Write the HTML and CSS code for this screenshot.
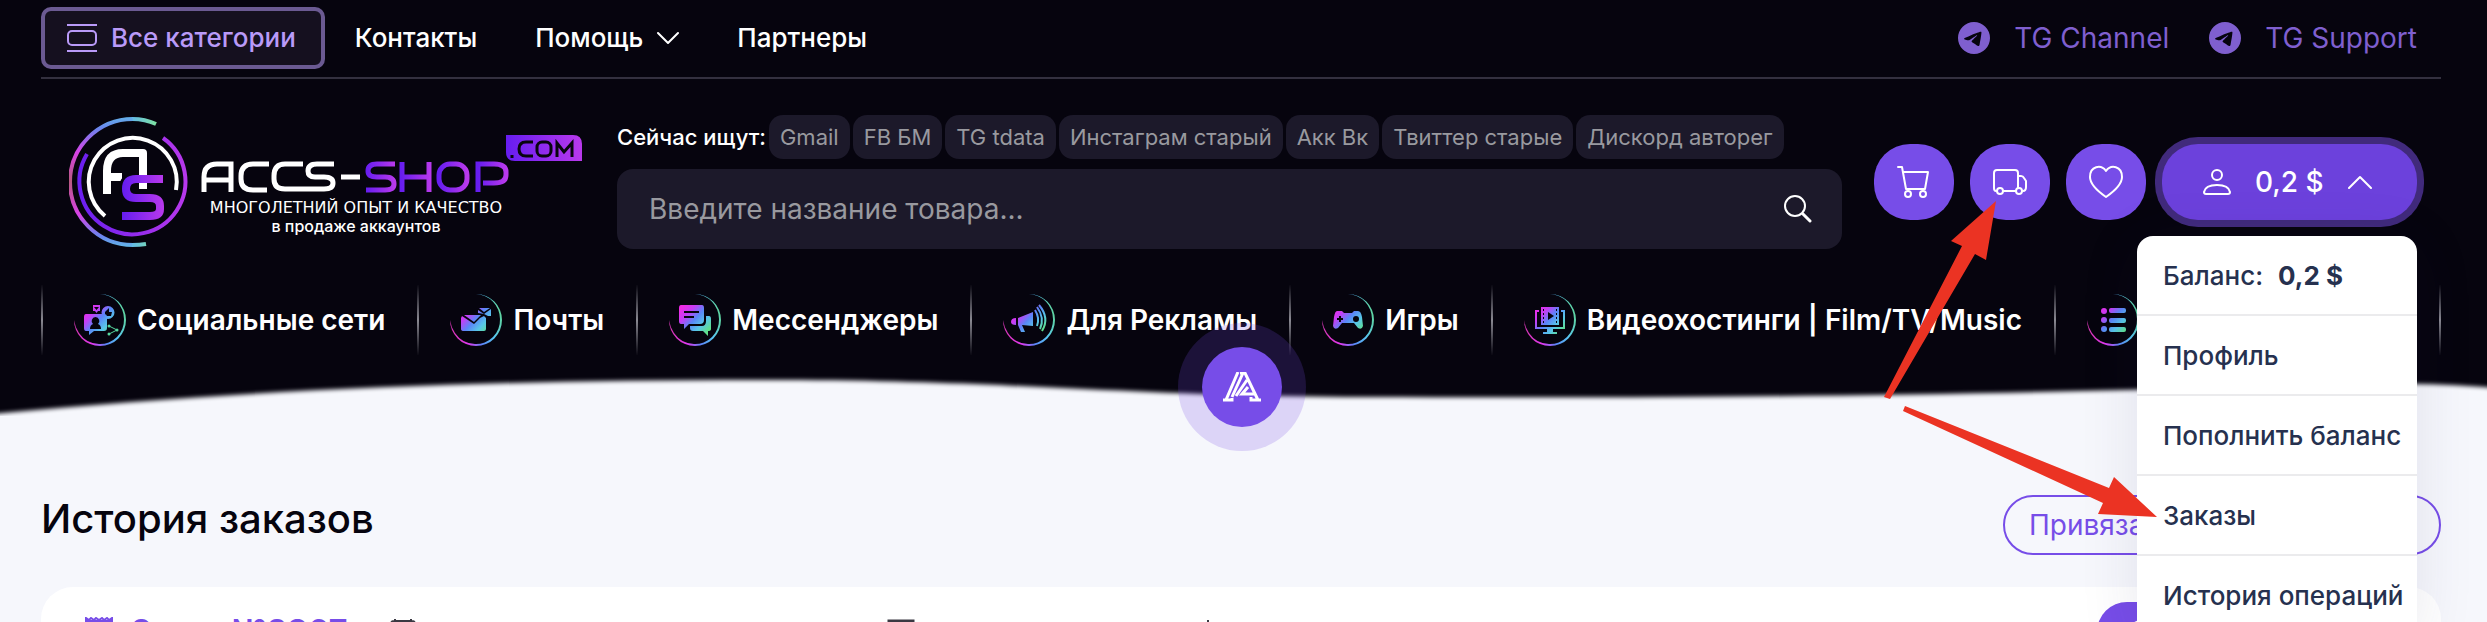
FILE: index.html
```html
<!DOCTYPE html>
<html lang="ru">
<head>
<meta charset="utf-8">
<title>ACCS-SHOP — История заказов</title>
<link rel="stylesheet" href="styles.css">
</head>
<body>
<svg class="defs" width="0" height="0" aria-hidden="true">
  <defs>
    <linearGradient id="neon" gradientUnits="userSpaceOnUse" x1="12" y1="14" x2="38" y2="38">
      <stop offset="0" stop-color="#f02be6"/><stop offset=".25" stop-color="#c63df5"/><stop offset=".5" stop-color="#5a86f8"/><stop offset=".75" stop-color="#58c6e8"/><stop offset="1" stop-color="#5fe08a"/>
    </linearGradient>
    <linearGradient id="ring" gradientUnits="userSpaceOnUse" x1="0" y1="34" x2="52" y2="20">
      <stop offset="0" stop-color="#d636b0"/><stop offset=".25" stop-color="#e038f0"/><stop offset=".5" stop-color="#5a86f8"/><stop offset=".75" stop-color="#58c6f0"/><stop offset="1" stop-color="#5fd59a"/>
    </linearGradient>
    <symbol id="crescent" viewBox="0 0 52 52">
      <path fill="url(#ring)" d="M26 0A26 26 0 1 1 0 26Q1 33 5 39A25 25 0 0 0 25 50A24 24 0 0 0 50 25A25 25 0 0 0 26 0Z"/>
    </symbol>
  </defs>
</svg>

<header class="header">
  <svg class="wave" viewBox="0 0 2487 60" preserveAspectRatio="none" aria-hidden="true">
    <path d="M-20 70V44C250 18 500 8 800 9C1050 11 1120 26 1400 26C1800 28 2050 21 2370 13C2420 12 2460 14 2510 18V70Z"/>
  </svg>
  <div class="container">
    <div class="topbar">
      <nav class="topnav">
        <button class="all-cats" type="button">
          <svg width="30" height="30" viewBox="0 0 30 30" fill="none" stroke="currentColor" stroke-width="2"><path d="M0 2H30M0 28H30"/><rect x="1" y="8" width="28" height="14" rx="4"/></svg>
          Все категории
        </button>
        <a class="toplink" href="#">Контакты</a>
        <a class="toplink" href="#">Помощь
          <svg width="22" height="14" viewBox="0 0 22 14" fill="none" stroke="currentColor" stroke-width="2" stroke-linecap="round" stroke-linejoin="round"><path d="M1 2L11 12L21 2"/></svg>
        </a>
        <a class="toplink" href="#">Партнеры</a>
      </nav>
      <div class="tg">
        <a href="#"><svg width="32" height="32" viewBox="0 0 16 16"><path fill="currentColor" d="M16 8A8 8 0 1 1 0 8a8 8 0 0 1 16 0M8.287 5.906q-1.168.486-4.666 2.01-.567.225-.595.442c-.03.243.275.339.69.47l.175.055c.408.133.958.288 1.243.294q.39.01.868-.32 3.269-2.206 3.374-2.23c.05-.012.12-.026.166.016s.042.12.037.141c-.03.129-1.227 1.241-1.846 1.817-.193.18-.33.307-.358.336a8 8 0 0 1-.188.186c-.38.366-.664.64.015 1.088.327.216.589.393.85.571.284.194.568.387.936.629q.14.092.27.187c.331.236.63.448.997.414.214-.02.435-.22.547-.82.265-1.417.786-4.486.906-5.751a1.4 1.4 0 0 0-.013-.315.34.34 0 0 0-.114-.217.53.53 0 0 0-.31-.093c-.3.005-.763.166-2.984 1.09"/></svg>TG Channel</a>
        <a href="#"><svg width="32" height="32" viewBox="0 0 16 16"><path fill="currentColor" d="M16 8A8 8 0 1 1 0 8a8 8 0 0 1 16 0M8.287 5.906q-1.168.486-4.666 2.01-.567.225-.595.442c-.03.243.275.339.69.47l.175.055c.408.133.958.288 1.243.294q.39.01.868-.32 3.269-2.206 3.374-2.23c.05-.012.12-.026.166.016s.042.12.037.141c-.03.129-1.227 1.241-1.846 1.817-.193.18-.33.307-.358.336a8 8 0 0 1-.188.186c-.38.366-.664.64.015 1.088.327.216.589.393.85.571.284.194.568.387.936.629q.14.092.27.187c.331.236.63.448.997.414.214-.02.435-.22.547-.82.265-1.417.786-4.486.906-5.751a1.4 1.4 0 0 0-.013-.315.34.34 0 0 0-.114-.217.53.53 0 0 0-.31-.093c-.3.005-.763.166-2.984 1.09"/></svg>TG Support</a>
      </div>
    </div>

    <div class="main-row">
      <a class="logo" href="#" aria-label="ACCS-SHOP.COM">
        <svg width="518" height="134" viewBox="0 0 518 134">
          <defs>
            <linearGradient id="lg-p" gradientUnits="userSpaceOnUse" x1="10" y1="0" x2="118" y2="0"><stop offset="0" stop-color="#6a1fef"/><stop offset="1" stop-color="#b838ec"/></linearGradient>
            <linearGradient id="lg-o" gradientUnits="userSpaceOnUse" x1="0" y1="0" x2="0" y2="132"><stop offset="0" stop-color="#62b8e8"/><stop offset=".1" stop-color="#6a86ee"/><stop offset=".28" stop-color="#d742e6"/><stop offset=".5" stop-color="#b85a80"/><stop offset=".75" stop-color="#d742e6"/><stop offset=".92" stop-color="#6a86ee"/><stop offset="1" stop-color="#62b8e8"/></linearGradient>
            <linearGradient id="lg-s" x1="0" y1="0" x2="1" y2="0"><stop offset="0" stop-color="#661df0"/><stop offset="1" stop-color="#b939ec"/></linearGradient>
            <linearGradient id="lg-h" gradientUnits="userSpaceOnUse" x1="332" y1="0" x2="362" y2="0"><stop offset="0" stop-color="#661df0"/><stop offset="1" stop-color="#b939ec"/></linearGradient>
            <linearGradient id="lg-f" gradientUnits="userSpaceOnUse" x1="54" y1="0" x2="95" y2="0"><stop offset="0" stop-color="#661df0"/><stop offset="1" stop-color="#b939ec"/></linearGradient>
            <linearGradient id="lg-g" gradientUnits="userSpaceOnUse" x1="62" y1="0" x2="88" y2="0"><stop offset="0" stop-color="#62b8e8"/><stop offset="1" stop-color="#7fe3a0"/></linearGradient>
          </defs>
          <g fill="none" stroke-width="4">
            <path stroke="url(#lg-o)" d="M64 4A63 63 0 0 0 64 130"/>
            <path stroke="url(#lg-g)" d="M63.500 4Q76 4 87 9M63 130Q71 130 77 129"/>
            <path stroke="url(#lg-p)" d="M94 23A53 53 0 1 1 18 39"/>
            <path stroke="#fff" d="M107 75A44 44 0 1 0 36 101"/>
          </g>
          <path fill="none" stroke="#fff" stroke-width="8" stroke-linejoin="round" d="M38 79V56Q38 38 54 38H74V73M38 62H53"/>
          <path fill="none" stroke="#06040e" stroke-width="12" d="M93 64H66Q56 64 56 73Q56 83 66 83H82"/>
          <path fill="none" stroke="#fff" stroke-width="8" d="M74 38V60M74 68V74"/>
          <path fill="none" stroke="url(#lg-f)" stroke-width="8" d="M94 64H67Q57 64 57 74Q57 83 67 83H81Q91 83 91 91V94Q91 101 81 101H53"/>
          <g fill="none" stroke="#fff" stroke-width="5">
            <path d="M135 77V62Q135 49 148 49H162V77M135 65H162"/>
            <path d="M200 49H184Q172 49 172 61V64Q172 75 184 75H198"/>
            <path d="M234 49H216Q205 49 205 61V64Q205 74 216 74H255Q264 74 264 68Q264 62 255 62H246Q239 62 239 56Q239 49 248 49H265"/>
            <path d="M272 62H291"/>
          </g>
          <g fill="none" stroke="url(#lg-s)" stroke-width="5">
            <path d="M326 49H308Q299 49 299 56Q299 62 308 62H316Q325 62 325 69Q325 75 316 75H297"/>
            <path stroke="url(#lg-h)" d="M333 47V77M360 47V77M333 62H360"/>
            <rect x="370" y="49" width="28" height="26" rx="11"/>
            <path d="M409 77V49H425Q437 49 437 57V60Q437 68 425 68H414"/>
          </g>
          <path fill="url(#lg-s)" d="M437 20H504Q513 20 513 29V46H446Q437 46 437 37Z"/>
          <g fill="none" stroke="#08050f" stroke-width="3"><path d="M464 27H457Q450 27 450 34Q450 41 457 41H464M488 42V28L495 37L503 28V42M443 40V43"/><rect x="468" y="27" width="14" height="14" rx="5"/></g>
        </svg>
        <span class="logo-text"><span class="tagline">многолетний опыт и качество</span><span class="subline">в продаже аккаунтов</span></span>
      </a>

      <div class="search-col">
        <div class="tags">
          <span class="tags-label">Сейчас ищут:</span>
          <a href="#">Gmail</a><a href="#">FB БМ</a><a href="#">TG tdata</a><a href="#">Инстаграм старый</a><a href="#">Акк Вк</a><a href="#">Твиттер старые</a><a href="#">Дискорд авторег</a>
        </div>
        <form class="search">
          <input type="text" aria-label="Поиск товара" placeholder="Введите название товара...">
          <button type="button" aria-label="Найти"><svg width="28" height="28" viewBox="0 0 28 28" fill="none" stroke="#fff" stroke-linecap="round"><circle cx="11" cy="11" r="10" stroke-width="2"/><path d="M19 19L26 26" stroke-width="3"/></svg></button>
        </form>
      </div>

      <div class="actions">
        <button class="round" type="button" aria-label="Корзина"><svg width="34" height="34" viewBox="0 0 34 34"><path d="M1 2H5L9 24H28L31 7H6"/><circle cx="11" cy="29" r="3"/><circle cx="26" cy="29" r="3"/></svg></button>
        <button class="round" type="button" aria-label="Заказы"><svg width="34" height="34" viewBox="0 0 34 34"><path d="M4 26H3Q1 26 1 23V8Q1 5 4 5H22Q25 5 25 8V23M10 26H23M25 11H28Q30 11 31 13L33 16V22Q33 26 30 26"/><circle cx="7" cy="26" r="3"/><circle cx="26" cy="26" r="3"/></svg></button>
        <button class="round" type="button" aria-label="Избранное"><svg width="34" height="34" viewBox="0 0 34 34"><path d="M17 6C12-1 1 1 1 12C1 19 7 25 17 32C27 25 33 19 33 12C33 1 22-1 17 6Z"/></svg></button>
        <div class="account">
          <button class="account-btn" type="button" aria-expanded="true">
            <svg width="28" height="28" viewBox="0 0 28 28"><circle cx="14" cy="7" r="5"/><path d="M3 26H25Q27 26 27 24C26 19 21 17 14 17C7 17 2 19 1 24Q1 26 3 26Z"/></svg>
            <span>0,2 $</span>
            <svg width="24" height="14" viewBox="0 0 24 14"><path d="M1 13L12 2L23 13"/></svg>
          </button>
          <ul class="menu">
            <li><a href="#">Баланс: <b>0,2 $</b></a></li>
            <li><a href="#">Профиль</a></li>
            <li><a href="#">Пополнить баланс</a></li>
            <li><a href="#">Заказы</a></li>
            <li><a href="#">История операций</a></li>
          </ul>
        </div>
      </div>
    </div>

    <nav class="cats">
      <a href="#"><svg width="52" height="52" viewBox="0 0 52 52"><use href="#crescent"/><g fill="url(#neon)"><path fill-rule="evenodd" d="M12 20H30Q33 20 33 23V34Q33 37 30 37H20L15 41V37H12Q10 37 10 34V23Q10 20 12 20ZM21.500 23A4 4 0 0 0 19 30Q16 31 16 35H27Q27 31 24 30A4 4 0 0 0 21.500 23Z"/><path fill-rule="evenodd" d="M19 11H26V17H24L22.500 19L21 17H19ZM22.500 16L25 13H20Z"/><path fill-rule="evenodd" d="M34 12A6.500 6.500 0 1 1 34 25A6.500 6.500 0 1 1 34 12ZM31 18V22H37L38 18H35V14Z"/></g><path d="M35 32L43 36L35 40" fill="none" stroke="#56d8a0" stroke-width="1"/><g fill="#56d8a0"><circle cx="35" cy="32" r="1.500"/><circle cx="43" cy="36" r="1.500"/><circle cx="35" cy="40" r="1.500"/></g></svg>Социальные сети</a>
      <a href="#"><svg width="52" height="52" viewBox="0 0 52 52"><use href="#crescent"/><g fill="url(#neon)"><path d="M12 22L24 30L30 24L34 22L36 24V35Q36 37 34 37H14Q11 37 11 35V24Z"/><path d="M14 21H31L24 28Z"/><path d="M28 16L34 20L41 15V22H38L34 20L28 19ZM29 14H40L34 18Z"/></g></svg>Почты</a>
      <a href="#"><svg width="52" height="52" viewBox="0 0 52 52"><use href="#crescent"/><path fill="url(#neon)" fill-rule="evenodd" d="M12 11H33Q35 11 35 14V26Q35 30 31 30H20L15 35V30H12Q10 30 10 27V14Q10 11 12 11ZM15 17V19H30V17ZM15 22V24H25V22Z"/><path fill="url(#neon)" d="M37 22H40Q42 22 42 25V35Q42 37 39 37V42L34 37H24Q21 37 21 34V32H33Q37 32 37 27Z"/></svg>Мессенджеры</a>
      <a href="#"><svg width="52" height="52" viewBox="0 0 52 52"><use href="#crescent"/><path fill="url(#neon)" d="M15 24L30 18V32L19 31L22 38H18L15 31ZM13 24V31Q8 31 8 28Q8 24 13 24Z"/><path fill="none" stroke="url(#neon)" stroke-width="2" d="M32 16Q37 24 34 32M34 13Q42 24 37 35M36 11Q47 24 39 37"/></svg>Для Рекламы</a>
      <a href="#"><svg width="52" height="52" viewBox="0 0 52 52"><use href="#crescent"/><path fill="url(#neon)" fill-rule="evenodd" d="M15 17H20L22 19H30L32 17H36Q39 17 40 23L41 32Q40 36 36 34L32 29H20L16 34Q12 36 11 32L12 23Q13 17 15 17ZM17 22V24H15V26H17V28H19V26H21V24H19V22ZM34 22A3 3 0 1 0 34 28A3 3 0 1 0 34 22Z"/></svg>Игры</a>
      <a href="#"><svg width="52" height="52" viewBox="0 0 52 52"><use href="#crescent"/><path fill="url(#neon)" fill-rule="evenodd" d="M17 13H35V31H17ZM19 15V17H20V15ZM19 19V21H20V19ZM19 23V25H20V23ZM19 27V29H20V27ZM32 15V17H33V15ZM32 19V21H33V19ZM32 23V25H33V23ZM32 27V29H33V27ZM24 18L30 22L24 26Z"/><path fill="none" stroke="url(#neon)" stroke-width="2" d="M15 17H12V34H40V17H37"/><path fill="url(#neon)" d="M23 35H29V38H33V40H19V38H23Z"/></svg>Видеохостинги | Film/TV/Music</a>
      <a href="#" aria-label="Другое"><svg width="52" height="52" viewBox="0 0 52 52"><use href="#crescent"/><g fill="url(#neon)"><circle cx="17" cy="17" r="3"/><circle cx="17" cy="26" r="3"/><circle cx="17" cy="35" r="3"/><rect x="22" y="14" width="17" height="5" rx="2"/><rect x="22" y="24" width="17" height="5" rx="2"/><rect x="22" y="33" width="17" height="5" rx="2"/></g></svg></a>
    </nav>
  </div>
  <button class="fab" type="button" aria-label="Меню"><svg width="38" height="30" viewBox="0 0 38 30" fill="none" stroke="#fff" stroke-width="3"><path d="M15 0L3 28H9M17 1H22L35 28M0 28H9V26M38 28H28V25M20 1L9 25M24 8L13 24M25 15L19 22H31"/></svg></button>
</header>

<main class="container">
  <div class="title-row">
    <h1>История заказов</h1>
    <button class="bind" type="button">Привязать</button>
  </div>
  <section class="card">
    <div class="order">
      <span class="order-no"><svg width="28" height="30" viewBox="0 0 28 30" fill="none" stroke="currentColor" stroke-width="2"><path d="M1 30V1L4 3L6 1L9 3L11 1L14 3L17 1L19 3L22 1L24 3L27 1V30M1 4H27"/></svg>Заказ №2867</span>
      <svg width="26" height="26" viewBox="0 0 26 26" fill="none" stroke="currentColor" stroke-width="2"><path d="M5 0V3M21 0V3M1 26V5Q1 2 4 2H22Q25 2 25 5V26M1 9H25"/></svg>
      <svg width="28" height="26" viewBox="0 0 28 26" fill="none" stroke="currentColor" stroke-width="3"><path d="M2 26V2H26V26"/></svg>
      <svg width="2" height="24" viewBox="0 0 2 24" stroke="currentColor" stroke-width="2"><path d="M1 0V24"/></svg>
    </div>
    <button class="order-btn" type="button" aria-label="Подробнее"><svg width="24" height="24" viewBox="0 0 24 24" fill="none" stroke="currentColor" stroke-width="2"><circle cx="12" cy="12" r="11"/></svg></button>
  </section>
</main>

<svg class="arrows" width="2487" height="622" viewBox="0 0 2487 622" aria-hidden="true">
  <path d="M1996 201L1986 260L1975 254L1890 399L1884 397L1962 246L1951 241Z"/>
  <path d="M2157 517L2098 514L2103 503L1903 411L1905 406L2109 488L2114 477Z"/>
</svg>
</body>
</html>
```
FILE: styles.css
```css
* { box-sizing: border-box; }
body { margin: 0; background: #f6f7fc; color: #06040e; font: 400 28px/36px Inter, "Noto Sans", sans-serif; overflow: hidden; height: 100vh; position: relative; }
a { color: inherit; text-decoration: none; }
button, input { font: inherit; color: inherit; border: 0; background: none; padding: 0; margin: 0; }
svg { flex: none; display: block; }
.defs { position: absolute; }
.container { padding: 0 46px 0 41px; }

.header { position: relative; background: #06040e; color: #fff; padding-bottom: 61px; }
.wave { position: absolute; left: 0; bottom: -15px; width: 100%; height: 60px; }
.wave path { fill: #f6f7fc; filter: blur(2px); }
.header .container { position: relative; z-index: 2; }

.topbar { display: flex; justify-content: space-between; align-items: center; padding: 7px 0 8px; border-bottom: 2px solid #33303f; }
.topnav { display: flex; align-items: center; font-size: 26px; font-weight: 500; }
.all-cats { display: flex; align-items: center; gap: 14px; height: 62px; padding: 0 25px 0 22px; border: 4px solid #6b5a92; border-radius: 10px; background: #15101f; color: #b99af8; font-weight: 500; margin-right: 30px; }
.toplink { display: flex; align-items: center; gap: 14px; margin-right: 58px; }
.tg { display: flex; gap: 40px; padding-right: 24px; color: #7f5fcf; font-size: 28px; }
.tg a { display: flex; align-items: center; gap: 24px; }

.main-row { display: flex; align-items: flex-start; padding-top: 36px; }
.logo { position: relative; width: 518px; margin: 0 30px 0 28px; }
.logo-text { position: absolute; left: 134px; top: 85px; width: 306px; display: flex; flex-direction: column; align-items: center; font-size: 16px; line-height: 20px; font-weight: 500; white-space: nowrap; }
.tagline { text-transform: uppercase; font: 400 16px/16px "DejaVu Sans", sans-serif; }

.search-col { flex: 1; min-width: 0; }
.tags { display: flex; gap: 3px; font-size: 22px; color: #99999f; white-space: nowrap; line-height: 44px; }
.tags-label { color: #fff; font-weight: 500; }
.tags a { background: #1c192a; border-radius: 14px; padding: 0 11px; }
.search { display: flex; align-items: center; height: 80px; margin-top: 10px; padding: 0 30px 0 32px; border-radius: 16px; background: #1c192a; }
.search input { flex: 1; outline: 0; }
.search input::placeholder { color: #99999f; opacity: 1; }

.actions { display: flex; gap: 16px; margin: 29px 24px 0 32px; }
.actions svg { fill: none; stroke: #fff; stroke-width: 2; stroke-linecap: round; stroke-linejoin: round; }
.round { width: 80px; height: 76px; border-radius: 36px; background: #774de8; display: grid; place-items: center; }
.account { position: relative; z-index: 5; }
.account-btn { width: 255px; height: 76px; padding-left: 41px; border-radius: 36px; background: #6c41dc; box-shadow: 0 0 0 7px #412a7c; display: flex; align-items: center; gap: 24px; font-weight: 500; }
.menu { position: absolute; top: 92px; right: 0; width: 280px; margin: 0; padding: 0; list-style: none; background: #fff; border-radius: 16px; color: #26314f; font-size: 26px; font-weight: 500; box-shadow: 0 8px 60px rgba(40, 40, 90, .1); white-space: nowrap; }
.menu li { border-bottom: 2px solid #ebebed; padding: 22px 0 20px 26px; }
.menu b { font-weight: 700; margin-left: 8px; }

.cats { display: flex; margin-top: 36px; font-weight: 600; white-space: nowrap; }
.cats a { display: flex; align-items: center; gap: 11px; height: 70px; padding: 0 32px 0 31px; border-left: 2px solid; border-image: linear-gradient(transparent, #8a8992, transparent) 1; }
.cats a:last-child { flex: 1; border-right: 2px solid; }

.fab { position: absolute; z-index: 3; left: 50%; bottom: -11px; margin-left: -42px; width: 80px; height: 80px; border-radius: 50%; background: #774de8; box-shadow: 0 0 0 24px rgba(119, 77, 232, .2); display: grid; place-items: center; }

.title-row { display: flex; justify-content: space-between; align-items: flex-start; padding-top: 79px; }
h1 { margin: 0; font-size: 40px; line-height: 48px; font-weight: 500; }
.bind { height: 60px; width: 438px; padding: 0 24px; border: 2px solid #774de8; border-radius: 30px; color: #774de8; text-align: left; white-space: nowrap; }
.card { margin-top: 32px; padding: 15px 44px 24px; background: #fff; border-radius: 32px; display: flex; justify-content: space-between; align-items: flex-start; }
.order { display: grid; grid-template-columns: 305px 497px 320px auto; align-items: center; padding-top: 12px; color: #3a3842; }
.order-no { display: flex; align-items: center; gap: 18px; color: #774de8; font-size: 32px; font-weight: 700; }
.order-btn { width: 300px; height: 60px; padding-left: 32px; border-radius: 30px; background: #774de8; color: #fff; }

.arrows { position: absolute; left: 0; top: 0; z-index: 10; fill: #eb3323; pointer-events: none; }
```
